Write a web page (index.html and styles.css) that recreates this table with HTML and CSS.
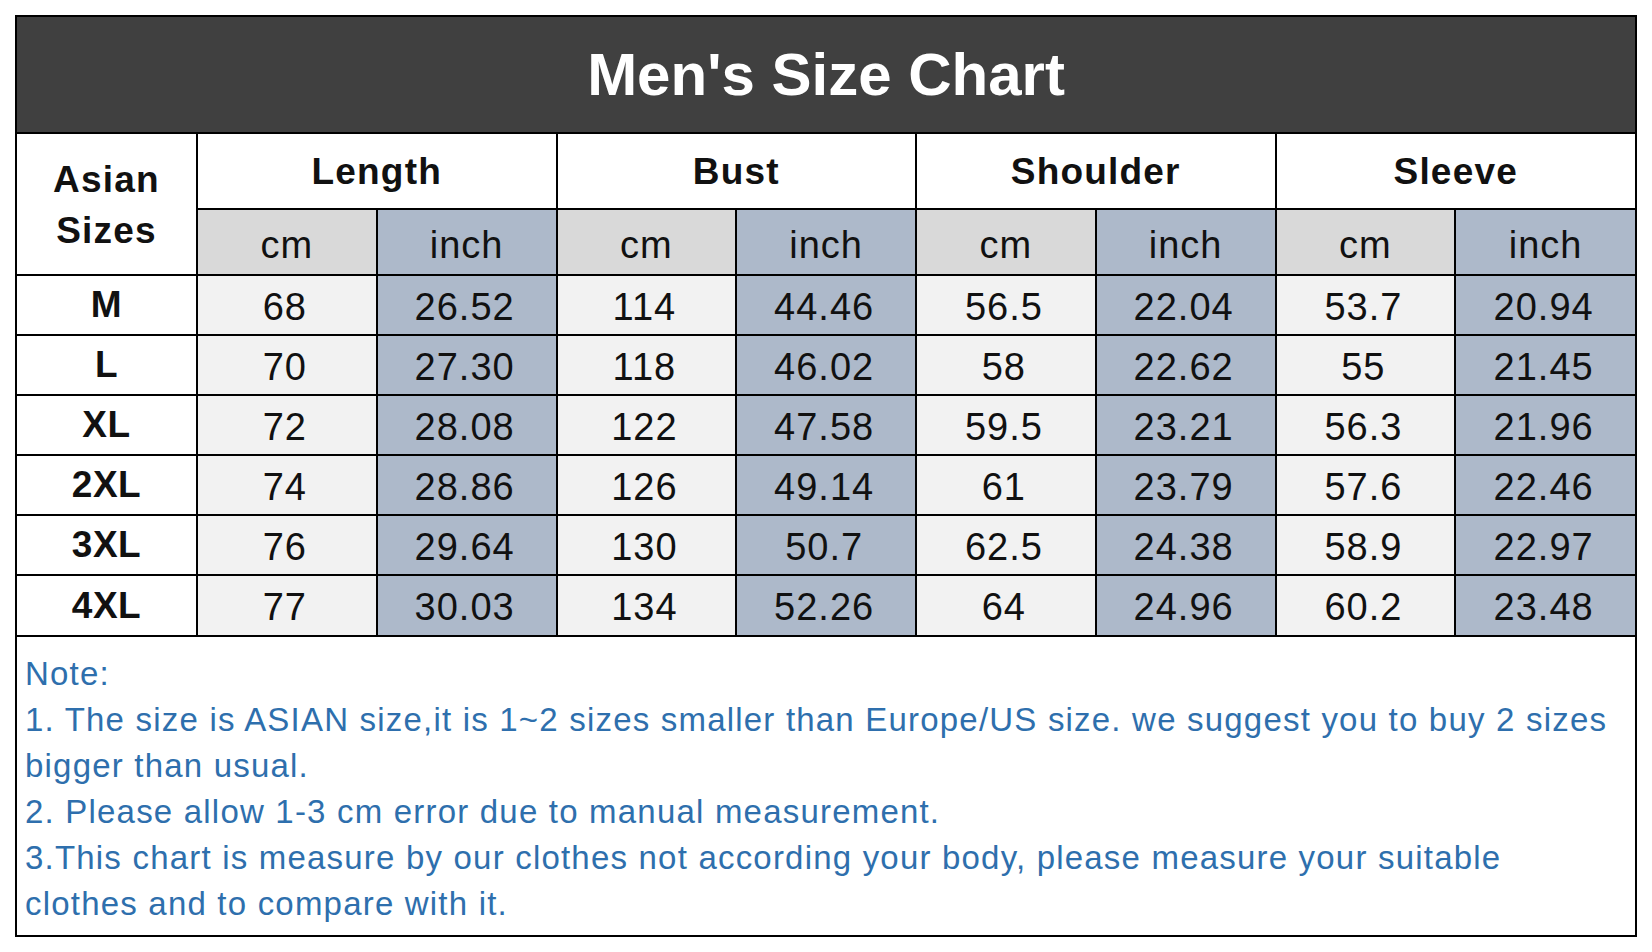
FILE: index.html
```html
<!DOCTYPE html>
<html lang="en">
<head>
<meta charset="utf-8">
<title>Men's Size Chart</title>
<link rel="stylesheet" href="styles.css">
</head>
<body>
<div class="chart">
  <div class="title">Men's Size Chart</div>
  <table class="sizes">
    <colgroup>
      <col class="c-size">
      <col><col><col><col><col><col><col><col>
    </colgroup>
    <thead>
      <tr class="r-group">
        <th rowspan="2" class="size-head">Asian<br>Sizes</th>
        <th colspan="2">Length</th>
        <th colspan="2">Bust</th>
        <th colspan="2">Shoulder</th>
        <th colspan="2">Sleeve</th>
      </tr>
      <tr class="r-unit">
        <th class="cm">cm</th><th class="in">inch</th>
        <th class="cm">cm</th><th class="in">inch</th>
        <th class="cm">cm</th><th class="in">inch</th>
        <th class="cm">cm</th><th class="in">inch</th>
      </tr>
    </thead>
    <tbody>
      <tr><th>M</th><td class="cm">68</td><td class="in">26.52</td><td class="cm">114</td><td class="in">44.46</td><td class="cm">56.5</td><td class="in">22.04</td><td class="cm">53.7</td><td class="in">20.94</td></tr>
      <tr><th>L</th><td class="cm">70</td><td class="in">27.30</td><td class="cm">118</td><td class="in">46.02</td><td class="cm">58</td><td class="in">22.62</td><td class="cm">55</td><td class="in">21.45</td></tr>
      <tr><th>XL</th><td class="cm">72</td><td class="in">28.08</td><td class="cm">122</td><td class="in">47.58</td><td class="cm">59.5</td><td class="in">23.21</td><td class="cm">56.3</td><td class="in">21.96</td></tr>
      <tr><th>2XL</th><td class="cm">74</td><td class="in">28.86</td><td class="cm">126</td><td class="in">49.14</td><td class="cm">61</td><td class="in">23.79</td><td class="cm">57.6</td><td class="in">22.46</td></tr>
      <tr><th>3XL</th><td class="cm">76</td><td class="in">29.64</td><td class="cm">130</td><td class="in">50.7</td><td class="cm">62.5</td><td class="in">24.38</td><td class="cm">58.9</td><td class="in">22.97</td></tr>
      <tr><th>4XL</th><td class="cm">77</td><td class="in">30.03</td><td class="cm">134</td><td class="in">52.26</td><td class="cm">64</td><td class="in">24.96</td><td class="cm">60.2</td><td class="in">23.48</td></tr>
    </tbody>
  </table>
  <div class="note">
    <p>Note:</p>
    <p>1. The size is ASIAN size,it is 1~2 sizes smaller than Europe/US size. we suggest you to buy 2 sizes bigger than usual.</p>
    <p>2. Please allow 1-3 cm error due to manual measurement.</p>
    <p>3.This chart is measure by our clothes not according your body, please measure your suitable clothes and to compare with it.</p>
  </div>
</div>
</body>
</html>
```

FILE: styles.css
```css
html, body {
  margin: 0;
  padding: 0;
  background: #ffffff;
}

body {
  font-family: "Liberation Sans", Arial, sans-serif;
  color: #111111;
}

.chart {
  box-sizing: border-box;
  width: 1622px;
  margin: 15px 0 0 15px;
  border: 2px solid #000000;
}

.title {
  height: 115px;
  background: #404040;
  color: #ffffff;
  font-weight: bold;
  font-size: 60px;
  line-height: 115px;
  text-align: center;
  border-bottom: 2px solid #000000;
}

.sizes {
  width: 100%;
  border-collapse: collapse;
  border-style: hidden;
  table-layout: fixed;
}

.c-size {
  width: 180px;
}

.sizes th,
.sizes td {
  border: 2px solid #000000;
  padding: 0;
  text-align: center;
  vertical-align: middle;
  font-size: 38px;
  letter-spacing: 1px;
  white-space: nowrap;
}

.sizes th {
  font-weight: bold;
  font-size: 37px;
  background: #ffffff;
}

.r-group {
  height: 75px;
}

.r-group th {
  padding-top: 2px;
  letter-spacing: 1.2px;
}

.size-head {
  line-height: 51px;
}

.r-unit {
  height: 66px;
}

.r-unit th {
  font-weight: normal;
  font-size: 38px;
  padding-top: 7px;
  letter-spacing: 1px;
}

.sizes tbody tr {
  height: 60px;
}

.sizes tbody th {
  background: #ffffff;
  letter-spacing: 0.5px;
}

.sizes td {
  padding-top: 4px;
  padding-right: 4px;
}

.r-unit th.cm {
  background: #d9d9d9;
}

.r-unit th.in,
.sizes td.in {
  background: #adb9ca;
}

.sizes td.cm {
  background: #f2f2f2;
}

.note {
  border-top: 2px solid #000000;
  padding: 14px 24px 8px 8px;
  color: #2e6fad;
  font-size: 33px;
  letter-spacing: 1.2px;
  line-height: 46px;
  min-height: 275px;
}

.note p {
  margin: 0;
}
```
